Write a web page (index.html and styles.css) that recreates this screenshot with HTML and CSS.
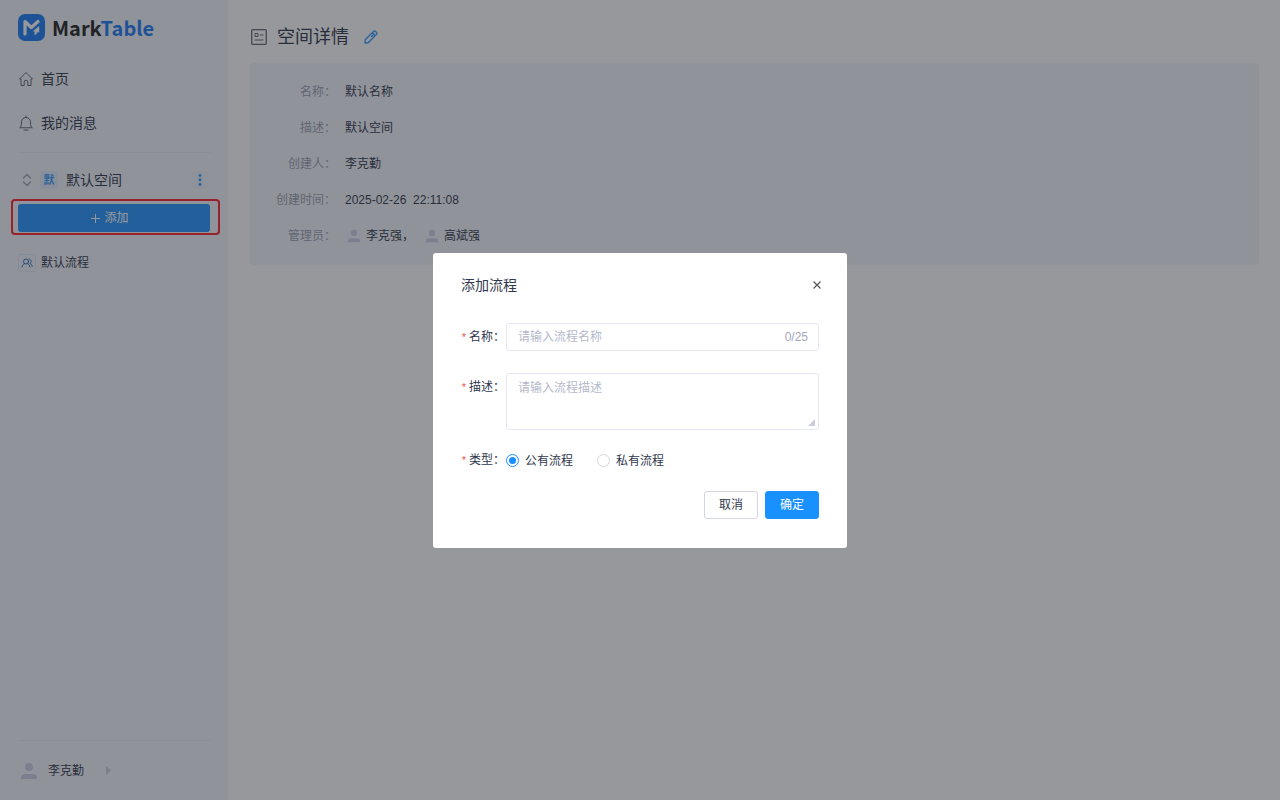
FILE: index.html
```html
<!DOCTYPE html>
<html lang="zh-CN">
<head>
    <meta charset="UTF-8">
    <meta name="viewport" content="width=device-width, initial-scale=1.0">
    <title>MarkTable</title>
    <link rel="stylesheet" href="styles.css">
</head>
<body>
    <svg class="symbols" aria-hidden="true">
        <symbol id="user" viewBox="0 0 18 18">
            <circle cx="9" cy="5" r="4" fill="currentColor"/>
            <path d="M1 17v-1c0-2.500 1.500-4 4-4h8c2.500 0 4 1.500 4 4v1z" fill="currentColor"/>
        </symbol>
    </svg>
    <div class="layout">
        <aside class="sidebar">
            <a class="logo" href="#">
                <svg width="28" height="28" viewBox="0 0 28 28">
                    <rect x="0" y="0" width="27" height="27" rx="7" fill="#1c7cf5"/>
                    <path d="M7 20V7.500l6.300 6L20 7.500" fill="none" stroke="#fff" stroke-width="3.200" stroke-linecap="round" stroke-linejoin="round"/>
                    <path d="M14.800 17.200l6.400-5.200v6.200l-2.400.2v1.400l-2.200 1.400v-3.800z" fill="#fff"/>
                </svg>
                <span class="logo-text">Mark<span>Table</span></span>
            </a>
            <nav class="menu">
                <a href="#">
                    <svg width="16" height="16" viewBox="0 0 16 16" fill="none" stroke="currentColor" stroke-linejoin="round">
                        <path d="M3 8H1.500L8 1.500 14.500 8H13v6.500H9.800V11a1.800 1.800 0 0 0-3.600 0v3.500H3z"/>
                    </svg>
                    首页
                </a>
                <a href="#">
                    <svg width="16" height="16" viewBox="0 0 16 16" fill="none" stroke="currentColor" stroke-linecap="round" stroke-linejoin="round">
                        <path d="M2 12.500c1-.8 1.500-1.800 1.500-5.500a4.500 4.500 0 0 1 9 0c0 3.700.5 4.700 1.500 5.500zM8 2.500V1M6 15h4"/>
                    </svg>
                    我的消息
                </a>
            </nav>
            <div class="space">
                <svg width="10" height="14" viewBox="0 0 10 14" fill="none" stroke="#a0a0a6" stroke-width="1.300" stroke-linecap="round" stroke-linejoin="round">
                    <path d="M1.500 5L5 1.500 8.500 5M1.500 9L5 12.500 8.500 9"/>
                </svg>
                <span class="space-tag">默</span>
                <span class="space-name">默认空间</span>
                <button class="more-btn" aria-label="更多">
                    <svg width="4" height="12" viewBox="0 0 4 12" fill="currentColor">
                        <circle cx="2" cy="1.500" r="1.400"/><circle cx="2" cy="6" r="1.400"/><circle cx="2" cy="10.500" r="1.400"/>
                    </svg>
                </button>
            </div>
            <div class="add-box">
                <button class="add-btn">
                    <svg width="9" height="9" viewBox="0 0 9 9" stroke="currentColor" fill="none"><path d="M4.500 0v9M0 4.500h9"/></svg>
                    添加
                </button>
            </div>
            <a class="flow" href="#">
                <span class="flow-icon">
                    <svg width="12" height="10" viewBox="0 0 12 10" fill="none" stroke="currentColor" stroke-linecap="round">
                        <circle cx="5" cy="3.500" r="2.500"/>
                        <path d="M1 9c.3-2 1.300-3 2.500-3.300M6.500 5.700C7.700 6 8.700 7 9 9M8 1c2.500.2 2.800 3.500.8 4.400C10.200 6 11 7 11.200 8.500"/>
                    </svg>
                </span>
                默认流程
            </a>
            <div class="account">
                <svg class="avatar" width="18" height="18"><use href="#user"/></svg>
                <span>李克勤</span>
                <svg class="arrow" width="5" height="9" viewBox="0 0 5 9"><path d="M0 0l5 4.500L0 9z" fill="currentColor"/></svg>
            </div>
        </aside>
        <main class="content">
            <header class="title">
                <svg width="16" height="16" viewBox="0 0 16 16" fill="none" stroke="currentColor">
                    <rect x=".7" y=".7" width="14.600" height="14.600" rx="1" stroke-width="1.300"/>
                    <path d="M4 4.500h3v3H4zM9 6h3.500M3.500 11h9"/>
                </svg>
                <h1>空间详情</h1>
                <button class="edit-btn" aria-label="编辑">
                    <svg width="14" height="14" viewBox="0 0 14 14" fill="none" stroke="currentColor" stroke-width="1.300" stroke-linejoin="round">
                        <path d="M1 11.200c0-.8.200-1.400.7-1.900l7.800-7.900c.6-.6 1.300-.6 1.900 0l1.100 1.100c.6.6.6 1.300 0 1.900l-7.800 7.800c-.5.500-1.100.8-1.900.8H1zM8.200 2.700l3 3M10.500 3.500L7 7"/>
                    </svg>
                </button>
            </header>
            <dl class="detail">
                <dt>名称：</dt>
                <dd>默认名称</dd>
                <dt>描述：</dt>
                <dd>默认空间</dd>
                <dt>创建人：</dt>
                <dd>李克勤</dd>
                <dt>创建时间：</dt>
                <dd>2025-02-26&nbsp; 22:11:08</dd>
                <dt>管理员：</dt>
                <dd class="admins">
                    <span class="admin"><svg width="14" height="14"><use href="#user"/></svg>李克强，</span>
                    <span class="admin"><svg width="14" height="14"><use href="#user"/></svg>高斌强</span>
                </dd>
            </dl>
        </main>
    </div>

    <div class="mask">
        <form class="dialog" role="dialog" aria-labelledby="dialog-title">
            <div class="dialog-header">
                <h2 id="dialog-title">添加流程</h2>
                <button type="button" class="close-btn" aria-label="关闭">
                    <svg width="8" height="8" viewBox="0 0 8 8" fill="none" stroke="currentColor" stroke-width="1.200"><path d="M.5.5l7 7M7.500.5l-7 7"/></svg>
                </button>
            </div>
            <div class="form-item">
                <label class="form-label" for="name">名称：</label>
                <div class="input-box">
                    <input type="text" id="name" maxlength="25" placeholder="请输入流程名称">
                    <span class="count">0/25</span>
                </div>
            </div>
            <div class="form-item">
                <label class="form-label" for="desc">描述：</label>
                <div class="textarea-box">
                    <textarea id="desc" placeholder="请输入流程描述"></textarea>
                </div>
            </div>
            <div class="form-item form-type" role="radiogroup" aria-labelledby="type-label">
                <span class="form-label" id="type-label">类型：</span>
                <label class="radio"><input type="radio" name="type" checked>公有流程</label>
                <label class="radio"><input type="radio" name="type">私有流程</label>
            </div>
            <div class="dialog-footer">
                <button type="button" class="btn">取消</button>
                <button type="submit" class="btn btn-primary">确定</button>
            </div>
        </form>
    </div>
</body>
</html>
```
FILE: styles.css
```css
* {
    box-sizing: border-box;
}
body {
    margin: 0;
    font-family: "Liberation Sans", "Noto Sans CJK SC", sans-serif;
    font-size: 12px;
    line-height: 20px;
    color: #30374e;
    background-color: #fff;
}
a {
    color: inherit;
    text-decoration: none;
}
button {
    padding: 0;
    border: none;
    background: none;
    font: inherit;
    color: inherit;
    cursor: pointer;
}
svg {
    display: block;
    flex-shrink: 0;
}
.symbols {
    position: absolute;
    width: 0;
    height: 0;
}
.layout {
    display: flex;
    min-height: 100vh;
}

/* sidebar */
.sidebar {
    display: flex;
    flex-direction: column;
    flex-shrink: 0;
    width: 228px;
    padding: 14px 8px 0 18px;
    background-color: #f2f6fc;
}
.logo {
    display: flex;
    align-items: center;
    gap: 6px;
    height: 28px;
}
.logo-text {
    font-family: "Noto Sans CJK SC", sans-serif;
    font-size: 20px;
    font-weight: 700;
    line-height: 28px;
    color: #222;
}
.logo-text span {
    color: #1c7cf5;
}
.menu {
    display: flex;
    flex-direction: column;
    gap: 20px;
    margin: 25px 10px 0 0;
    padding-bottom: 17px;
    border-bottom: 1px solid #ebebee;
}
.menu a {
    display: flex;
    align-items: center;
    gap: 7px;
    height: 24px;
    font-size: 14px;
}
.menu svg {
    color: #60657a;
}
.space {
    display: flex;
    align-items: center;
    height: 20px;
    margin: 17px 11px 0 4px;
}
.space-tag {
    width: 18px;
    height: 18px;
    margin: 0 8px;
    border-radius: 3px;
    background-color: #e2ecfd;
    color: #3a9cff;
    font-size: 11px;
    font-weight: 700;
    line-height: 18px;
    text-align: center;
}
.space-name {
    font-size: 14px;
}
.more-btn {
    display: flex;
    align-items: center;
    justify-content: center;
    width: 18px;
    height: 18px;
    margin-left: auto;
    border-radius: 3px;
    background-color: #eaf2fd;
    color: #2a96ff;
}
.add-box {
    margin: 9px 0 0 -7px;
    padding: 3px 8px 1px 5px;
    border: 2px solid #ff2028;
    border-radius: 4px;
}
.add-btn {
    display: flex;
    align-items: center;
    justify-content: center;
    gap: 4px;
    width: 100%;
    height: 28px;
    padding-right: 8px;
    border-radius: 3px;
    background-color: #2494ff;
    color: #fff;
}
.flow {
    display: flex;
    align-items: center;
    gap: 5px;
    margin-top: 18px;
}
.flow-icon {
    display: flex;
    align-items: center;
    justify-content: center;
    width: 18px;
    height: 18px;
    border: 1px solid #dbe9fc;
    border-radius: 3px;
    color: #2a6cb8;
}
.account {
    display: flex;
    align-items: center;
    height: 60px;
    margin: auto 10px 0 0;
    padding-left: 2px;
    border-top: 1px solid #ebebee;
}
.avatar,
.admin svg {
    color: #ccd0e8;
}
.account span {
    margin: 0 22px 0 10px;
}
.arrow {
    color: #d0d0d4;
}

/* space detail */
.content {
    flex: 1;
    padding: 25px 21px 0 22px;
}
.title {
    display: flex;
    align-items: center;
    height: 24px;
    padding-left: 1px;
}
.title svg {
    color: #60657a;
}
.title h1 {
    margin: 0 15px 0 10px;
    font-size: 18px;
    font-weight: 400;
    line-height: 24px;
}
.title .edit-btn svg {
    color: #2a96ff;
}
.detail {
    display: grid;
    grid-template-columns: 86px 1fr;
    gap: 16px 9px;
    margin: 14px 0 0;
    padding: 19px 0;
    border-radius: 3px;
    background-color: #f2f6fc;
}
.detail dt {
    color: #9a9eb2;
    text-align: right;
}
.detail dd {
    margin: 0;
}
.admins {
    display: flex;
    gap: 9px;
}
.admin {
    display: flex;
    align-items: center;
    gap: 5px;
    padding-left: 2px;
}

/* add dialog */
.mask {
    position: fixed;
    inset: 0;
    display: flex;
    align-items: center;
    justify-content: center;
    background-color: rgba(34, 37, 42, 0.47);
}
.dialog {
    width: 414px;
    padding: 20px 28px 29px;
    border-radius: 3px;
    background-color: #fff;
}
.dialog-header {
    display: flex;
    align-items: center;
    justify-content: space-between;
    margin-bottom: 26px;
}
.dialog-header h2 {
    margin: 0;
    font-size: 14px;
    font-weight: 400;
    line-height: 24px;
}
.close-btn {
    display: flex;
    align-items: center;
    justify-content: center;
    width: 16px;
    height: 16px;
    margin-right: -6px;
    color: #555;
}
.form-item {
    display: flex;
    align-items: flex-start;
    margin-bottom: 21px;
}
.form-label {
    width: 45px;
    padding-left: 1px;
    line-height: 28px;
    white-space: nowrap;
}
.form-label::before {
    content: "*";
    margin-right: 3px;
    font-size: 10px;
    color: #f5483b;
}
.input-box,
.textarea-box {
    display: flex;
    flex: 1;
    min-width: 0;
    border: 1px solid #e6e7f2;
    border-radius: 3px;
}
.input-box {
    align-items: center;
    height: 28px;
    padding-right: 10px;
}
.input-box input,
.textarea-box textarea {
    flex: 1;
    min-width: 0;
    padding: 4px 11px;
    border: none;
    outline: none;
    background: none;
    font: inherit;
    color: inherit;
}
.textarea-box {
    position: relative;
    height: 57px;
}
.textarea-box textarea {
    resize: none;
}
.textarea-box::after {
    content: "";
    position: absolute;
    right: 3px;
    bottom: 3px;
    border-style: solid;
    border-width: 0 0 7px 7px;
    border-color: transparent transparent #c9ccdc;
}
.input-box input::placeholder,
.textarea-box textarea::placeholder {
    color: #b4b8ca;
    opacity: 1;
}
.count {
    color: #a4a8b8;
}
.form-type {
    align-items: center;
    height: 20px;
    margin-bottom: 20px;
}
.radio {
    display: flex;
    align-items: center;
    gap: 6px;
    margin-right: 24px;
}
.radio input {
    appearance: none;
    width: 13px;
    height: 13px;
    margin: 0;
    border: 1px solid #d5d7de;
    border-radius: 50%;
    background-color: #fff;
}
.radio input:checked {
    padding: 2px;
    border-color: #1890ff;
    background-color: #1890ff;
    background-clip: content-box;
}
.dialog-footer {
    display: flex;
    justify-content: flex-end;
    gap: 7px;
}
.btn {
    width: 54px;
    height: 28px;
    border: 1px solid #d2d4e2;
    border-radius: 3px;
}
.btn-primary {
    border-color: #1890ff;
    background-color: #1890ff;
    color: #fff;
}
```
